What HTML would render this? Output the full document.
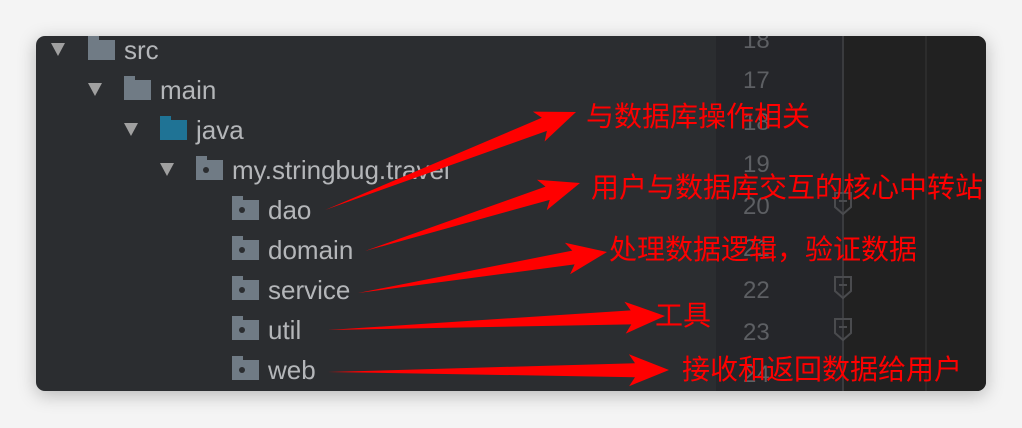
<!DOCTYPE html>
<html><head><meta charset="utf-8"><style>
html,body{margin:0;padding:0;background:#f4f4f4;width:1022px;height:428px;overflow:hidden;position:relative}
.win{position:absolute;left:36px;top:36px;width:950px;height:355px;border-radius:9px;overflow:hidden;background:#2b2d30;box-shadow:0 4px 18px rgba(0,0,0,.25)}
.gut{position:absolute;left:680px;top:0;width:127px;height:355px;background:#25262a}
.ed{position:absolute;left:808px;top:0;width:142px;height:355px;background:#212121}
.vl{position:absolute;top:0;width:2px;height:355px;background:#3a3b3e}
.row{position:absolute;font:26px "Liberation Sans","Noto Sans CJK SC",sans-serif;color:#b4b6b9;line-height:28px}
.tri{position:absolute;width:0;height:0;border-left:7px solid transparent;border-right:7px solid transparent;border-top:13px solid #a0a0a0}
.fd{position:absolute;width:27px;height:20px;background:#707b85}
.fd:before{content:"";position:absolute;left:0;top:-4px;width:11px;height:5px;background:inherit}
.fd.p:after{content:"";position:absolute;left:7px;top:7px;width:6px;height:6px;border-radius:50%;background:#2b2d30}
.ln{position:absolute;left:707px;font:24px "Liberation Sans",sans-serif;color:#5d5f63}
.lab{position:absolute;font:28px "Liberation Sans","Noto Sans CJK SC",sans-serif;color:#ff0000;line-height:30px;white-space:nowrap}
</style></head><body>
<div class="win">
<div class="gut"></div><div class="ed"></div>
<div class="vl" style="left:806px"></div><div class="vl" style="left:889px;background:#2c2c2c"></div>
<div class="ln" style="top:-9px">18</div><div class="ln" style="top:31px">17</div><div class="ln" style="top:73px">18</div><div class="ln" style="top:115px">19</div><div class="ln" style="top:157px">20</div><div class="ln" style="top:199px">21</div><div class="ln" style="top:241px">22</div><div class="ln" style="top:283px">23</div><div class="ln" style="top:325px">24</div>
<svg width="950" height="355" style="position:absolute;left:0;top:0">
<g fill="none" stroke="#4a4b4e" stroke-width="2">
<path d="M799 157h16v14l-8 7l-8-7z"/><path d="M799 241h16v14l-8 7l-8-7z"/><path d="M799 283h16v14l-8 7l-8-7z"/>
<path d="M803 165h8M803 249h8M803 291h8"/></g></svg>
</div>
<div class="tri" style="left:51px;top:43px"></div><div class="fd" style="left:88px;top:40px"></div><div class="row" style="left:124px;top:36px">src</div>
<div class="tri" style="left:88px;top:83px"></div><div class="fd" style="left:124px;top:80px"></div><div class="row" style="left:160px;top:76px">main</div>
<div class="tri" style="left:124px;top:123px"></div><div class="fd" style="left:160px;top:120px;background:#1f7395"></div><div class="row" style="left:196px;top:116px">java</div>
<div class="tri" style="left:160px;top:163px"></div><div class="fd p" style="left:196px;top:160px"></div><div class="row" style="left:232px;top:156px">my.stringbug.travel</div>
<div class="fd p" style="left:232px;top:200px"></div><div class="row" style="left:268px;top:196px">dao</div>
<div class="fd p" style="left:232px;top:240px"></div><div class="row" style="left:268px;top:236px">domain</div>
<div class="fd p" style="left:232px;top:280px"></div><div class="row" style="left:268px;top:276px">service</div>
<div class="fd p" style="left:232px;top:320px"></div><div class="row" style="left:268px;top:316px">util</div>
<div class="fd p" style="left:232px;top:360px"></div><div class="row" style="left:268px;top:356px">web</div>
<svg id="ar" width="1022" height="428" style="position:absolute;left:0;top:0"></svg>
<div class="lab" style="left:586px;top:102px">与数据库操作相关</div>
<div class="lab" style="left:591px;top:173px">用户与数据库交互的核心中转站</div>
<div class="lab" style="left:609px;top:235px">处理数据逻辑，验证数据</div>
<div class="lab" style="left:655px;top:301px">工具</div>
<div class="lab" style="left:682px;top:355px">接收和返回数据给用户</div>
<script>
var A=[[325,210,576,112],[365,251,580,183],[358,293,607,252],[328,330,665,316],[328,372,669,370]];
var s='';
A.forEach(function(a){var dx=a[2]-a[0],dy=a[3]-a[1],L=Math.hypot(dx,dy),ux=dx/L,uy=dy/L,nx=-uy,ny=ux;
var H=34,bx=a[2]-ux*H,by=a[3]-uy*H;function p(x,y){return x.toFixed(1)+','+y.toFixed(1)}
s+='<polygon fill="#ff0000" points="'+[p(a[0],a[1]),p(bx+nx*7,by+ny*7),p(bx-ux*6+nx*16,by-uy*6+ny*16),p(a[2],a[3]),p(bx-ux*6-nx*16,by-uy*6-ny*16),p(bx-nx*7,by-ny*7)].join(' ')+'"/>';});
document.getElementById('ar').innerHTML=s;
</script>
</body></html>
